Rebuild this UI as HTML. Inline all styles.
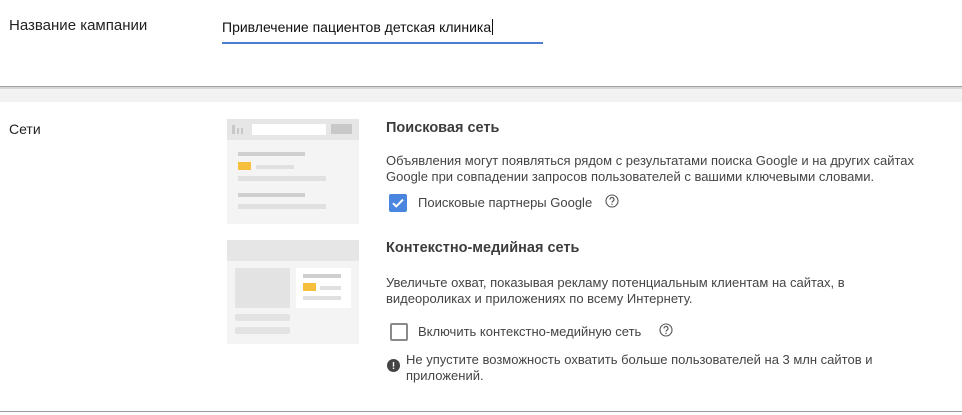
<!DOCTYPE html>
<html><head><meta charset="utf-8"><style>
*{margin:0;padding:0;box-sizing:border-box}
body{width:962px;height:415px;background:#fff;font-family:"Liberation Sans",Arial,sans-serif;color:#333;position:relative;overflow:hidden}
.a{position:absolute;white-space:nowrap}
.b{position:absolute;background:#e0e0e0}
</style></head><body>
<div class="a" style="left:9px;top:17px;font-size:15px;color:#222">Название кампании</div>
<div class="a" style="left:222px;top:19px;font-size:14px;color:#111">Привлечение пациентов детская клиника<span style="border-left:1px solid #111;margin-left:1px"></span></div>
<div style="position:absolute;left:222px;top:42px;width:321px;height:2px;background:#4a7fd0"></div>
<div style="position:absolute;left:0;top:86px;width:962px;height:1px;background:#a0a0a0"></div>
<div style="position:absolute;left:0;top:87px;width:962px;height:2px;background:#d6d6d6"></div>
<div style="position:absolute;left:0;top:89px;width:962px;height:13px;background:#f2f2f2"></div>
<div class="a" style="left:9px;top:121px;font-size:14px;color:#222">Сети</div>

<div style="position:absolute;left:227px;top:119px;width:132px;height:105px;background:#f4f4f4"></div>
<div style="position:absolute;left:227px;top:119px;width:132px;height:21px;background:#e6e6e6"></div>
<div style="position:absolute;left:232px;top:125px;width:3px;height:9px;background:#c8c8c8"></div>
<div style="position:absolute;left:237px;top:128px;width:2px;height:6px;background:#c8c8c8"></div>
<div style="position:absolute;left:241px;top:128px;width:2px;height:6px;background:#c8c8c8"></div>
<div style="position:absolute;left:252px;top:124px;width:74px;height:11px;background:#fff"></div>
<div style="position:absolute;left:331px;top:124px;width:21px;height:10px;background:#c8c8c8"></div>
<div class="b" style="left:238px;top:152px;width:67px;height:4px;background:#cfcfcf"></div>
<div style="position:absolute;left:238px;top:162px;width:13px;height:8px;background:#f6bf3c"></div>
<div class="b" style="left:256px;top:165px;width:38px;height:4px"></div>
<div class="b" style="left:238px;top:176px;width:88px;height:5px"></div>
<div class="b" style="left:238px;top:193px;width:67px;height:4px;background:#cfcfcf"></div>
<div class="b" style="left:238px;top:204px;width:88px;height:5px"></div>

<div style="position:absolute;left:227px;top:240px;width:132px;height:104px;background:#f4f4f4"></div>
<div style="position:absolute;left:227px;top:240px;width:132px;height:21px;background:#e6e6e6"></div>
<div style="position:absolute;left:235px;top:268px;width:55px;height:40px;background:#e3e3e3;border-radius:2px"></div>
<div style="position:absolute;left:296px;top:268px;width:55px;height:40px;background:#fff"></div>
<div class="b" style="left:303px;top:274px;width:38px;height:4px;background:#cfcfcf"></div>
<div style="position:absolute;left:303px;top:283px;width:13px;height:8px;background:#f6bf3c"></div>
<div class="b" style="left:320px;top:286px;width:21px;height:4px"></div>
<div class="b" style="left:303px;top:296px;width:38px;height:4px"></div>
<div style="position:absolute;left:235px;top:314px;width:55px;height:7px;background:#e3e3e3;border-radius:2px"></div>
<div style="position:absolute;left:235px;top:327px;width:55px;height:7px;background:#e3e3e3;border-radius:2px"></div>

<div class="a" style="left:386px;top:120px;font-size:14.5px;font-weight:bold;color:#3c3c3c">Поисковая сеть</div>
<div class="a" style="left:386px;top:153px;font-size:13px;line-height:16px;color:#444">Объявления могут появляться рядом с результатами поиска Google и на других сайтах<br>Google при совпадении запросов пользователей с вашими ключевыми словами.</div>
<div style="position:absolute;left:389px;top:194px;width:18px;height:18px;background:#4a86e0;border-radius:2px">
<svg width="18" height="18" viewBox="0 0 18 18"><path d="M4 9.2l3.3 3.2L14 5.6" fill="none" stroke="#fff" stroke-width="2"/></svg></div>
<div class="a" style="left:418px;top:195px;font-size:13px;color:#444">Поисковые партнеры Google</div>
<svg style="position:absolute;left:605px;top:194px" width="14" height="14" viewBox="0 0 14 14"><circle cx="7" cy="7" r="6" fill="none" stroke="#555" stroke-width="1.1"/><path d="M5 5.5a2 2 0 1 1 2.8 1.8c-.6.3-.8.6-.8 1.3" fill="none" stroke="#555" stroke-width="1.1"/><circle cx="7" cy="10.3" r=".7" fill="#555"/></svg>

<div class="a" style="left:386px;top:240px;font-size:14.5px;font-weight:bold;color:#3c3c3c">Контекстно-медийная сеть</div>
<div class="a" style="left:386px;top:275px;font-size:13px;line-height:16px;color:#444">Увеличьте охват, показывая рекламу потенциальным клиентам на сайтах, в<br>видеороликах и приложениях по всему Интернету.</div>
<div style="position:absolute;left:390px;top:323px;width:18px;height:18px;border:2px solid #8a8a8a;border-radius:2px"></div>
<div class="a" style="left:418px;top:324px;font-size:13px;color:#444">Включить контекстно-медийную сеть</div>
<svg style="position:absolute;left:659px;top:323px" width="14" height="14" viewBox="0 0 14 14"><circle cx="7" cy="7" r="6" fill="none" stroke="#555" stroke-width="1.1"/><path d="M5 5.5a2 2 0 1 1 2.8 1.8c-.6.3-.8.6-.8 1.3" fill="none" stroke="#555" stroke-width="1.1"/><circle cx="7" cy="10.3" r=".7" fill="#555"/></svg>
<svg style="position:absolute;left:387px;top:359px" width="13" height="13" viewBox="0 0 13 13"><circle cx="6.5" cy="6.5" r="6.5" fill="#444"/><rect x="5.8" y="3" width="1.4" height="4.6" fill="#fff"/><rect x="5.8" y="8.6" width="1.4" height="1.4" fill="#fff"/></svg>
<div class="a" style="left:406px;top:352px;font-size:13px;line-height:16px;color:#444">Не упустите возможность охватить больше пользователей на 3 млн сайтов и<br>приложений.</div>
<div style="position:absolute;left:0;top:411px;width:962px;height:1px;background:#9a9a9a"></div>
</body></html>
